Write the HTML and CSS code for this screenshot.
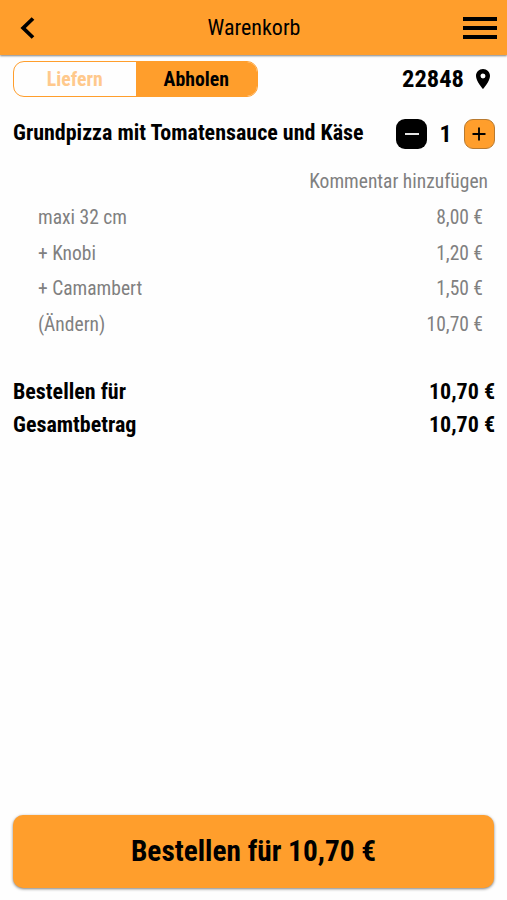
FILE: index.html
```html
<!DOCTYPE html>
<html lang="de">
<head>
  <meta charset="UTF-8">
  <meta name="viewport" content="width=device-width, initial-scale=1.0">
  <title>Warenkorb</title>
  <link rel="stylesheet" href="styles.css">
</head>
<body>
  <header class="topbar">
    <button class="icon-btn" aria-label="Zurück">
      <svg width="15" height="22" viewBox="0 0 15 22"><path d="M13 1.5 3.2 11l9.8 9.5" fill="none" stroke="#000" stroke-width="3.8"/></svg>
    </button>
    <h1>Warenkorb</h1>
    <button class="icon-btn" aria-label="Menü">
      <svg width="34" height="24" viewBox="0 0 34 24"><path d="M0 3h34M0 12h34M0 21h34" stroke="#000" stroke-width="4"/></svg>
    </button>
  </header>

  <main>
    <div class="options">
      <div class="switch">
        <button>Liefern</button>
        <button class="active">Abholen</button>
      </div>
      <div class="location">
        <span>22848</span>
        <svg width="14" height="20" viewBox="5 2 14 20"><path d="M12 2C8.13 2 5 5.13 5 9c0 5.25 7 13 7 13s7-7.75 7-13c0-3.87-3.13-7-7-7zm0 9.5a2.5 2.5 0 0 1 0-5 2.5 2.5 0 0 1 0 5z"/></svg>
      </div>
    </div>

    <section class="item">
      <div class="item-head">
        <h2>Grundpizza mit Tomatensauce und Käse</h2>
        <div class="counter">
          <button class="minus" aria-label="Weniger"><svg width="14" height="14" viewBox="0 0 14 14"><path d="M0 7h14" stroke="#fff" stroke-width="1.8"/></svg></button>
          <span>1</span>
          <button class="plus" aria-label="Mehr"><svg width="14" height="14" viewBox="0 0 14 14"><path d="M0.5 7h13M7 0.5v13" stroke="#000" stroke-width="1.8"/></svg></button>
        </div>
      </div>
      <p class="comment">Kommentar hinzufügen</p>
      <ul class="details">
        <li><span>maxi 32 cm</span><span>8,00 €</span></li>
        <li><span>+ Knobi</span><span>1,20 €</span></li>
        <li><span>+ Camambert</span><span>1,50 €</span></li>
        <li><span>(Ändern)</span><span>10,70 €</span></li>
      </ul>
    </section>

    <div class="totals">
      <p><span>Bestellen für</span><span>10,70 €</span></p>
      <p><span>Gesamtbetrag</span><span>10,70 €</span></p>
    </div>
  </main>

  <footer>
    <button class="order-btn">Bestellen für 10,70 €</button>
  </footer>
</body>
</html>
```

FILE: styles.css
```css
* {
  box-sizing: border-box;
}
body {
  margin: 0;
  height: 900px;
  display: flex;
  flex-direction: column;
  overflow: hidden;
  background: #fefefe;
  color: #000;
  font-family: "Roboto Condensed", Roboto, "Liberation Sans", sans-serif;
  font-stretch: 75%;
  font-size: 22px;
}
h1, h2, p, ul {
  margin: 0;
  padding: 0;
}
button {
  font: inherit;
  font-stretch: inherit;
  color: inherit;
  border: none;
  background: none;
  padding: 0;
}
svg {
  display: block;
}
.topbar {
  display: flex;
  align-items: center;
  justify-content: space-between;
  height: 55px;
  padding: 1px 10px 0 20px;
  background: #ff9e2c;
  box-shadow: 0 1px 2px rgba(0, 0, 0, 0.5);
}
.topbar h1 {
  padding: 0 9px 2px 0;
  font-size: 22px;
  font-weight: 400;
}
.icon-btn {
  display: flex;
  width: 34px;
}
main {
  flex: 1;
  padding: 6px 12px 0 13px;
}
.options {
  display: flex;
  align-items: center;
  justify-content: space-between;
  height: 36px;
}
.switch {
  display: flex;
  width: 245px;
  height: 36px;
  border: 1px solid #ff9e2c;
  border-radius: 11px;
  overflow: hidden;
  font-size: 19.8px;
  font-weight: 700;
}
.switch button {
  flex: 1;
  color: #ffc98c;
}
.switch .active {
  background: #ff9e2c;
  color: #000;
}
.location {
  display: flex;
  align-items: center;
  gap: 12px;
  padding-right: 5px;
  font-size: 24.5px;
  font-weight: 700;
}
.location span {
  padding-bottom: 2px;
}
.item-head {
  display: flex;
  align-items: center;
  justify-content: space-between;
  height: 30px;
  margin-top: 22px;
}
.item-head h2 {
  padding-bottom: 2px;
  font-size: 22px;
  font-weight: 700;
  line-height: 26px;
}
.counter {
  display: flex;
  align-items: center;
  justify-content: space-between;
  width: 99px;
  font-size: 24px;
  font-weight: 700;
}
.counter button {
  display: flex;
  align-items: center;
  justify-content: center;
  width: 31px;
  height: 30px;
  border-radius: 9px;
}
.minus {
  background: #000;
}
.plus {
  background: #ff9e2c;
  border: 1px solid #b87a30;
}
.comment {
  margin-top: 19px;
  padding-right: 7px;
  color: #808080;
  font-size: 19.5px;
  line-height: 27px;
  text-align: right;
}
.details {
  list-style: none;
  padding: 5px 12px 0 25px;
  color: #808080;
  font-size: 19.5px;
}
.details li {
  display: flex;
  justify-content: space-between;
  line-height: 35.5px;
}
.totals {
  margin-top: 33px;
  font-weight: 700;
}
.totals p {
  display: flex;
  justify-content: space-between;
  line-height: 33px;
}
footer {
  padding: 0 13px 12px;
}
.order-btn {
  display: block;
  width: 100%;
  height: 73px;
  padding-bottom: 2px;
  border-radius: 10px;
  background: #ff9e2c;
  box-shadow: 0 1px 3px rgba(0, 0, 0, 0.5);
  font-size: 29.3px;
  font-weight: 700;
}
```
